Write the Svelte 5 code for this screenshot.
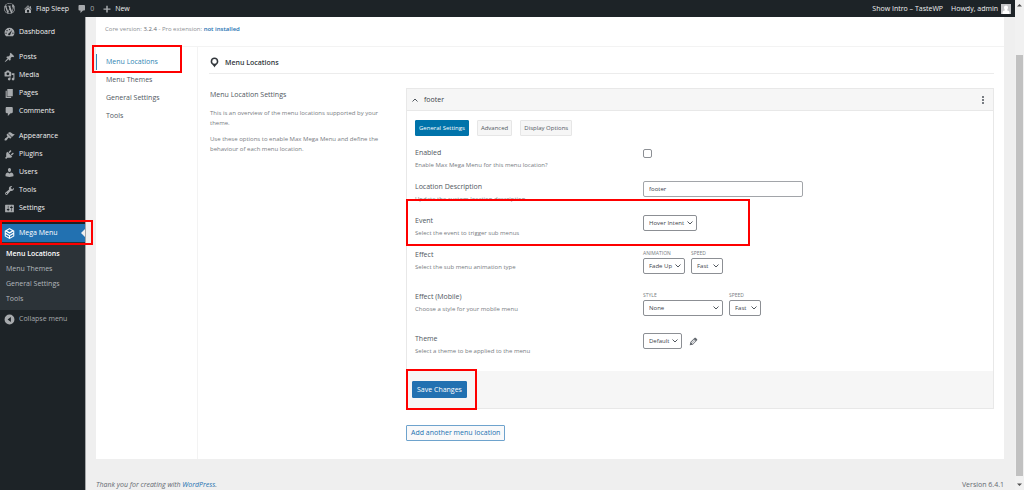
<script>
  let location = $state('footer');
  let enabled = $state(false);

  const icons = {
    wordpress: 'M20 10c0-5.51-4.49-10-10-10C4.48 0 0 4.49 0 10c0 5.52 4.48 10 10 10 5.51 0 10-4.48 10-10zM7.78 15.37L4.37 6.22c.55-.02 1.17-.08 1.17-.08.5-.06.44-1.13-.06-1.11 0 0-1.45.11-2.37.11-.18 0-.37 0-.58-.01C4.12 2.69 6.87 1.11 10 1.11c2.33 0 4.45.87 6.05 2.34-.68-.11-1.65.39-1.65 1.58 0 .74.45 1.36.9 2.1.35.61.55 1.36.55 2.46 0 1.49-1.4 5-1.4 5l-3.03-8.37c.54-.02.82-.17.82-.17.5-.05.44-1.25-.06-1.22 0 0-1.44.12-2.38.12-.87 0-2.33-.12-2.33-.12-.5-.03-.56 1.2-.06 1.22l.92.08 1.26 3.41zM17.41 10c.24-.64.74-1.87.43-4.25.7 1.29 1.05 2.71 1.05 4.25 0 3.29-1.73 6.24-4.4 7.78.97-2.59 1.94-5.2 2.92-7.78zM6.1 18.09C3.12 16.65 1.11 13.53 1.11 10c0-1.3.23-2.48.72-3.59C3.25 10.3 4.67 14.2 6.1 18.09zm4.03-6.63l2.58 6.98c-.86.29-1.76.45-2.71.45-.79 0-1.57-.11-2.29-.33.81-2.38 1.62-4.74 2.42-7.1z',
    home: 'M16 8.5l1.53 1.53-1.06 1.06L10 4.6l-6.47 6.49-1.06-1.06L10 2.5l4 4v-2h2v4zm-6-2.46l6 5.99V18H4v-5.97zM12 17v-5H8v5h4z',
    comments: 'M5 2h9c1.1 0 2 .9 2 2v7c0 1.1-.9 2-2 2h-2l-5 5v-5H5c-1.1 0-2-.9-2-2V4c0-1.1.9-2 2-2z',
    plus: 'M17 9v2.5h-5.5V17H8.5v-5.5H3V9h5.5V3.5h3V9z',
    dashboard: 'M3.8 17A9 9 0 1 1 16.2 17zM10 3.5a1.2 1.2 0 1 0 0 2.4 1.2 1.2 0 0 0 0-2.4zM5.5 5.5a1.2 1.2 0 1 0 0 2.4 1.2 1.2 0 0 0 0-2.4zM3.8 10a1.2 1.2 0 1 0 0 2.4 1.2 1.2 0 0 0 0-2.4zM16.2 10a1.2 1.2 0 1 0 0 2.4 1.2 1.2 0 0 0 0-2.4zM14.8 5.5L9 11.2a2 2 0 1 0 2.6 2z',
    posts: 'M10.44 3.02l1.82-1.82 6.36 6.35-1.83 1.82c-1.05-.68-2.48-.57-3.41.36l-.75.75c-.92.93-1.04 2.35-.35 3.41l-1.83 1.82-2.41-2.41-2.8 2.79c-.42.42-3.38 2.71-3.8 2.29s1.86-3.39 2.28-3.81l2.79-2.79L4.1 9.36l1.83-1.82c1.05.69 2.48.57 3.4-.36l.75-.75c.93-.92 1.05-2.35.36-3.41z',
    media: 'M13 11V4c0-.55-.45-1-1-1h-1.67L9 1H5L3.67 3H2c-.55 0-1 .45-1 1v7c0 .55.45 1 1 1h10c.55 0 1-.45 1-1zM7 4.5c1.38 0 2.5 1.12 2.5 2.5S8.38 9.5 7 9.5 4.5 8.38 4.5 7 5.62 4.5 7 4.5zM14 6h5v10.5c0 1.38-1.12 2.5-2.5 2.5S14 17.88 14 16.5s1.12-2.5 2.5-2.5c.17 0 .34.02.5.05V9h-3V6zm-4 8.05V13h2v3.5c0 1.38-1.12 2.5-2.5 2.5S7 17.88 7 16.5 8.12 14 9.5 14c.17 0 .34.02.5.05z',
    pages: 'M6 15V2h10v13H6zm-1 1h8v2H3V5h2v11z',
    appearance: 'M14.48 11.06L7.41 3.99l1.5-1.5c.5-.56 2.3-.47 3.51.32 1.21.8 1.43 1.28 2.91 2.1 1.18.64 2.45 1.26 4.45.85zm-.71.71L6.7 4.7 4.93 6.47c-.39.39-.39 1.02 0 1.41l1.06 1.06c.39.39.39 1.03 0 1.42-.6.6-1.43 1.11-2.21 1.69-.35.26-.7.53-1.01.84C1.43 14.23.4 16.08 1.4 17.07c.99 1 2.84-.03 4.18-1.36.31-.31.58-.66.85-1.02.57-.78 1.08-1.61 1.69-2.21.39-.39 1.02-.39 1.41 0l1.06 1.06c.39.39 1.02.39 1.41 0z',
    plugins: 'M13.11 4.36L9.87 7.6 8 5.73l3.24-3.24c.35-.34 1.05-.2 1.56.32.52.51.66 1.21.31 1.55zm-8 1.77l.91-1.12 9.01 9.01-1.19.84c-.71.71-2.63 1.16-3.82 1.16H6.14L4.9 17.26c-.59.59-1.54.59-2.12 0-.59-.58-.59-1.53 0-2.12l1.24-1.24v-3.88c0-1.13.4-3.19 1.09-3.89zm7.26 3.97l3.24-3.24c.34-.35 1.04-.21 1.55.31.52.51.66 1.21.31 1.55l-3.24 3.25z',
    users: 'M10 9.25c-2.27 0-2.73-3.44-2.73-3.44C7 4.02 7.82 2 9.97 2c2.16 0 2.98 2.02 2.71 3.81 0 0-.41 3.44-2.68 3.44zm0 2.57L12.72 10c2.39 0 4.52 2.33 4.52 4.53v2.49s-3.65 1.13-7.24 1.13c-3.65 0-7.24-1.13-7.24-1.13v-2.49c0-2.25 1.94-4.48 4.47-4.48z',
    tools: 'M16.68 9.77c-1.34 1.34-3.3 1.67-4.95.99l-5.41 6.52c-.99.99-2.59.99-3.58 0s-.99-2.59 0-3.57l6.52-5.42c-.68-1.65-.35-3.61.99-4.95 1.28-1.28 3.12-1.62 4.72-1.06l-2.89 2.89 2.82 2.82 2.86-2.87c.53 1.58.18 3.39-1.08 4.65zM3.81 16.21c.4.39 1.04.39 1.43 0 .4-.4.4-1.04 0-1.43-.39-.4-1.03-.4-1.43 0-.39.39-.39 1.03 0 1.43z',
    settings: 'M18 16V4c0-.55-.45-1-1-1H3c-.55 0-1 .45-1 1v12c0 .55.45 1 1 1h14c.55 0 1-.45 1-1zM8 11h1c.55 0 1 .45 1 1s-.45 1-1 1H8v1.5c0 .28-.22.5-.5.5s-.5-.22-.5-.5V13H6c-.55 0-1-.45-1-1s.45-1 1-1h1V5.5c0-.28.22-.5.5-.5s.5.22.5.5V11zm5-2h-1c-.55 0-1-.45-1-1s.45-1 1-1h1V5.5c0-.28.22-.5.5-.5s.5.22.5.5V7h1c.55 0 1 .45 1 1s-.45 1-1 1h-1v5.5c0 .28-.22.5-.5.5s-.5-.22-.5-.5V9z',
    mega: 'M10 0l8.7 5v10L10 20l-8.700-5V5zM10 2.2L5.5 4.8 10 7.4l4.5-2.6zM3.2 6.5v2.3L10 12.7l6.8-3.9V6.5L10 10.4zM3.2 11.2v2.7L9 17.2v-2.7zM16.8 11.2L11 14.5v2.7l5.8-3.3z',
    collapse: 'M10 1a9 9 0 1 0 0 18 9 9 0 0 0 0-18zM12.5 5.5v9L6.5 10z',
    location: 'M10 1C6.1 1 3 4.1 3 8c0 2.300 1.300 4.200 2.900 5.500C7.500 14.800 9.500 17.500 10 19c.5-1.500 2.500-4.200 4.100-5.500C15.700 12.200 17 10.300 17 8c0-3.900-3.100-7-7-7zm0 2.800a4.200 4.200 0 1 1 0 8.400 4.200 4.200 0 0 1 0-8.400z',
    edit: 'M13.89 3.39l2.71 2.72c.46.46.42 1.24.03 1.64l-8.01 8.02-5.56 1.16 1.16-5.58s7.6-7.63 7.99-8.03c.39-.39 1.22-.39 1.68.07zm-2.73 2.79l-5.59 5.61 1.11 1.11 5.54-5.65zm-2.97 8.23l5.58-5.6-1.07-1.08-5.59 5.6z',
    user: 'M10 3a4 4 0 0 1 4 4.2c0 2.3-1.300 4.600-2.300 5.300 3.300.7 5.300 2 5.300 4.500v3H3v-3c0-2.500 2-3.800 5.300-4.500C7.300 11.800 6 9.500 6 7.200A4 4 0 0 1 10 3z'
  };

  const menuGroups = [
    [{ name: 'Dashboard', icon: 'dashboard' }],
    [
      { name: 'Posts', icon: 'posts' },
      { name: 'Media', icon: 'media' },
      { name: 'Pages', icon: 'pages' },
      { name: 'Comments', icon: 'comments' }
    ],
    [
      { name: 'Appearance', icon: 'appearance' },
      { name: 'Plugins', icon: 'plugins' },
      { name: 'Users', icon: 'users' },
      { name: 'Tools', icon: 'tools' },
      { name: 'Settings', icon: 'settings' }
    ]
  ];

  const pages = ['Menu Locations', 'Menu Themes', 'General Settings', 'Tools'];
  const tabs = ['General Settings', 'Advanced', 'Display Options'];
  let activeTab = $state('General Settings');

  const rows = [
    { id: 'event', title: 'Event', desc: 'Select the event to trigger sub menus', marked: true,
      fields: [{ name: 'Event', options: ['Hover Intent', 'Hover', 'Click'] }] },
    { id: 'effect', title: 'Effect', desc: 'Select the sub menu animation type',
      fields: [
        { name: 'Animation', caption: true, options: ['Fade Up', 'Fade', 'Slide', 'None'] },
        { name: 'Speed', caption: true, options: ['Fast', 'Med', 'Slow'] }
      ] },
    { id: 'mobile', title: 'Effect (Mobile)', desc: 'Choose a style for your mobile menu',
      fields: [
        { name: 'Style', caption: true, wide: true, options: ['None', 'Slide Down', 'Slide Left', 'Slide Right'] },
        { name: 'Speed', caption: true, options: ['Fast', 'Med', 'Slow'] }
      ] },
    { id: 'theme', title: 'Theme', desc: 'Select a theme to be applied to the menu', edit: true,
      fields: [{ name: 'Theme', options: ['Default'] }] }
  ];
</script>

{#snippet icon(name)}
  <svg class="icon" viewBox="0 0 20 20" aria-hidden="true">
    <path fill="currentColor" fill-rule="evenodd" d={icons[name]} />
  </svg>
{/snippet}

<div class="screen">
  <div class="page">
    <header class="adminbar">
      <a href="#about" class="wp" aria-label="About WordPress">{@render icon('wordpress')}</a>
      <a href="#site">{@render icon('home')}Flap Sleep</a>
      <a href="#comments" class="count">{@render icon('comments')}<span>0</span></a>
      <a href="#new">{@render icon('plus')}New</a>
      <a href="#intro" class="intro">Show Intro – TasteWP</a>
      <a href="#profile">Howdy, admin <span class="avatar">{@render icon('user')}</span></a>
    </header>

    <div class="body">
      <nav class="sidebar" aria-label="Admin menu">
        {#each menuGroups as group}
          <ul>
            {#each group as item}
              <li><a href="#{item.icon}">{@render icon(item.icon)}{item.name}</a></li>
            {/each}
          </ul>
        {/each}
        <div class="current">
          <a href="#mega">{@render icon('mega')}Mega Menu</a>
          <span class="arrow"></span>
          <span class="mark"></span>
        </div>
        <ul class="submenu">
          {#each pages as page, i}
            <li><a href="#sub-{i}" class:active={i === 0}>{page}</a></li>
          {/each}
        </ul>
        <button class="collapse">{@render icon('collapse')}Collapse menu</button>
      </nav>

      <div class="content">
        <div class="panel">
          <div class="version">
            Core version: <b>3.2.4</b> - Pro extension: <a href="#pro">not installed</a>
          </div>
          <div class="columns">
            <nav class="pagenav" aria-label="Mega Menu">
              {#each pages as page, i}
                <div class="navitem" class:active={i === 0}>
                  <a href="#page-{i}">{page}</a>
                  {#if i === 0}<span class="mark"></span>{/if}
                </div>
              {/each}
            </nav>

            <main>
              <h1>{@render icon('location')}Menu Locations</h1>
              <div class="settings">
                <section class="intro-text">
                  <h2>Menu Location Settings</h2>
                  <p>This is an overview of the menu locations supported by your theme.</p>
                  <p>Use these options to enable Max Mega Menu and define the behaviour of each menu location.</p>
                </section>

                <div class="locations">
                  <form class="accordion" onsubmit={(e) => e.preventDefault()}>
                    <div class="accordion-head">
                      <svg class="caret" viewBox="0 0 6 4" aria-hidden="true"><path d="M.5 3.5L3 1l2.5 2.5" /></svg>
                      <h3>footer</h3>
                      <button type="button" class="more" aria-label="More options"><i></i><i></i><i></i></button>
                    </div>
                    <div class="accordion-body">
                      <div class="tabs">
                        {#each tabs as tab}
                          <button type="button" class:active={activeTab === tab} onclick={() => (activeTab = tab)}>{tab}</button>
                        {/each}
                      </div>

                      <div class="row">
                        <div class="about">
                          <label for="enabled">Enabled</label>
                          <p>Enable Max Mega Menu for this menu location?</p>
                        </div>
                        <input id="enabled" type="checkbox" bind:checked={enabled} />
                      </div>
                      <div class="row">
                        <div class="about">
                          <label for="description">Location Description</label>
                          <p>Update the custom location description</p>
                        </div>
                        <input id="description" type="text" bind:value={location} />
                      </div>
                      {#each rows as row}
                        <div class="row">
                          <div class="about">
                            <h4>{row.title}</h4>
                            <p>{row.desc}</p>
                          </div>
                          <div class="fields">
                            {#each row.fields as field}
                              <div class="field">
                                {#if field.caption}
                                  <label for="{row.id}-{field.name}">{field.name}</label>
                                {/if}
                                <div class="select" class:wide={field.wide}>
                                  <select id="{row.id}-{field.name}" aria-label={field.name}>
                                    {#each field.options as option}
                                      <option>{option}</option>
                                    {/each}
                                  </select>
                                  <svg viewBox="0 0 8 6" aria-hidden="true"><path d="M1.5 1.5L4 4l2.5-2.5" /></svg>
                                </div>
                              </div>
                            {/each}
                            {#if row.edit}
                              <a href="#edit" class="edit" aria-label="Edit theme">{@render icon('edit')}</a>
                            {/if}
                          </div>
                          {#if row.marked}<span class="mark"></span>{/if}
                        </div>
                      {/each}
                    </div>
                    <div class="accordion-foot">
                      <button type="submit" class="save">Save Changes</button>
                      <span class="mark"></span>
                    </div>
                  </form>
                  <button class="add">Add another menu location</button>
                </div>
              </div>
            </main>
          </div>
        </div>
        <footer>
          <em>Thank you for creating with <a href="#wordpress">WordPress</a>.</em>
          <span>Version 6.4.1</span>
        </footer>
      </div>
    </div>
  </div>

  <div class="scrollbar" aria-hidden="true">
    <svg viewBox="0 0 9 10"><path d="M2 6.5L4.5 4 7 6.5z" /></svg>
    <span class="thumb"></span>
    <svg viewBox="0 0 9 10"><path d="M2 3.5L4.5 6 7 3.5z" /></svg>
  </div>
</div>

<style>
  :global(body) {
    background: #efefef;
  }
  .screen {
    display: flex;
    height: 100vh;
    overflow: hidden;
    font: 7px/10px 'Open Sans', 'Noto Sans', sans-serif;
    color: #646970;
  }
  .screen * {
    box-sizing: border-box;
  }
  h1, h2, h3, h4, p, ul {
    margin: 0;
    padding: 0;
    font-size: 7px;
    font-weight: 400;
    list-style: none;
  }
  a {
    color: inherit;
    text-decoration: none;
  }
  button, input, select {
    margin: 0;
    font: inherit;
    color: inherit;
  }
  .icon {
    flex: none;
    width: 11px;
    height: 11px;
  }
  .mark {
    position: absolute;
    z-index: 2;
    border: 2px solid #fe0000;
    pointer-events: none;
  }

  .page {
    display: flex;
    flex-direction: column;
    flex: 1;
    min-width: 0;
  }

  /* Admin bar */
  .adminbar {
    display: flex;
    flex: none;
    align-items: center;
    gap: 8px;
    height: 17px;
    padding: 0 4px;
    background: #1d2327;
    color: #f0f0f1;
  }
  .adminbar a {
    display: flex;
    align-items: center;
    gap: 3px;
  }
  .adminbar .icon {
    width: 10px;
    height: 10px;
    color: #a7aaad;
  }
  .adminbar .wp .icon {
    width: 11px;
    height: 11px;
  }
  .adminbar .count span {
    color: #a7aaad;
  }
  .adminbar .intro {
    margin-left: auto;
  }
  .avatar {
    display: flex;
    background: #c3c4c7;
  }
  .adminbar .avatar .icon {
    color: #fff;
  }

  .body {
    display: flex;
    flex: 1;
  }

  /* Sidebar */
  .sidebar {
    position: relative;
    flex: none;
    width: 86px;
    padding-top: 6px;
    background: #1d2327;
    border-right: 1px solid #a4a6a8;
    color: #f0f0f1;
  }
  .sidebar ul {
    margin-bottom: 7px;
  }
  .sidebar ul a, .current a, .collapse {
    display: flex;
    align-items: center;
    gap: 4px;
    height: 18px;
    padding: 0 4px;
  }
  .sidebar .icon {
    color: #a7aaad;
  }
  .current {
    position: relative;
    background: #2271b1;
    color: #fff;
  }
  .current .icon {
    color: #fff;
  }
  .arrow {
    position: absolute;
    top: 5px;
    right: 0;
    border: 4px solid transparent;
    border-right-color: #efefef;
    border-left: 0;
  }
  .current .mark {
    inset: -4px -8px -3px 0;
  }
  .sidebar .submenu {
    margin: 0;
    padding: 4px 0;
    background: #2c3338;
  }
  .sidebar .submenu a {
    height: 15px;
    padding: 0 6px;
    color: #b4b9be;
  }
  .sidebar .submenu .active {
    color: #fff;
    font-weight: 600;
  }
  .collapse {
    border: 0;
    background: none;
    color: #a7aaad;
  }

  /* Page panel */
  .content {
    display: flex;
    flex-direction: column;
    flex: 1;
    min-width: 0;
    padding: 0 11px 0 10px;
  }
  .panel {
    background: #fff;
  }
  .version {
    height: 30px;
    padding: 7px 9px;
    border-bottom: 1px solid #f3f3f3;
    font-size: 6px;
    color: #8c8f94;
  }
  .version b {
    color: #646970;
    font-weight: 400;
  }
  .version a {
    color: #2271b1;
    font-weight: 600;
  }
  .columns {
    display: flex;
  }
  .pagenav {
    flex: none;
    width: 102px;
    padding-top: 6px;
    border-right: 1px solid #f3f3f3;
    color: #50575e;
  }
  .navitem {
    position: relative;
    display: flex;
    align-items: center;
    height: 18px;
  }
  .navitem a {
    padding: 3px 9px;
    border-left: 1px solid transparent;
  }
  .navitem.active a {
    border-color: #2f86b4;
    color: #2f86b4;
  }
  .navitem .mark {
    inset: -8px 15px -2px -4px;
  }

  main {
    flex: 1;
    min-width: 0;
    padding: 5px 10px 18px 11px;
  }
  h1 {
    display: flex;
    align-items: center;
    gap: 5px;
    height: 22px;
    border-bottom: 1px solid #ececec;
    color: #32373c;
    font-weight: 600;
  }
  .settings {
    display: flex;
    margin-top: 14px;
  }
  .intro-text {
    flex: none;
    width: 197px;
    padding: 0 20px 0 1px;
    color: #787c82;
  }
  .intro-text h2 {
    line-height: 14px;
    color: #50575e;
  }
  .intro-text p {
    margin-top: 6px;
    font-size: 6px;
  }
  .locations {
    flex: 1;
    min-width: 0;
  }

  /* Accordion */
  .accordion {
    border: 1px solid #e8e8e8;
  }
  .accordion-head {
    display: flex;
    align-items: center;
    gap: 6px;
    height: 22px;
    padding: 0 5px;
    background: #f6f6f6;
    border-bottom: 1px solid #e8e8e8;
  }
  .accordion-head h3 {
    color: #3c434a;
  }
  .caret {
    width: 6px;
    height: 4px;
    fill: none;
    stroke: #50575e;
  }
  .more {
    display: grid;
    gap: 1px;
    margin-left: auto;
    padding: 2px 4px;
    border: 0;
    background: none;
  }
  .more i {
    width: 2px;
    height: 2px;
    background: #787c82;
  }
  .accordion-body {
    padding: 9px 8px 4px;
  }
  .tabs {
    display: flex;
    gap: 8px;
    margin-bottom: 11px;
  }
  .tabs button {
    height: 16px;
    padding: 0 3px;
    border: 1px solid #e6e6e6;
    border-radius: 1px;
    background: #f6f6f6;
    font-size: 6px;
    color: #50575e;
  }
  .tabs .active {
    border-color: #0073aa;
    background: #0073aa;
    color: #fff;
  }
  .row {
    position: relative;
    display: flex;
    align-items: flex-start;
    padding-bottom: 10px;
  }
  .about {
    flex: none;
    width: 40%;
    line-height: 12px;
  }
  .about label, .about h4 {
    display: block;
    color: #50575e;
  }
  .about p {
    font-size: 6px;
    color: #787c82;
  }
  .row > .mark {
    inset: -16px 235px 3px -9px;
  }
  input[type='checkbox'] {
    appearance: none;
    width: 9px;
    height: 9px;
    margin-top: 2px;
    border: 1px solid #8c8f94;
    border-radius: 2px;
    background: #fff;
  }
  input[type='checkbox']:checked {
    background: #2271b1;
  }
  input[type='text'] {
    width: 28%;
    height: 16px;
    padding: 0 5px;
    border: 1px solid #a2a5a9;
    border-radius: 2px;
    font-size: 6px;
    color: #3c434a;
  }
  .fields {
    display: flex;
    align-items: flex-end;
    gap: 6px;
  }
  .field label {
    display: block;
    height: 9px;
    font-size: 5px;
    line-height: 8px;
    text-transform: uppercase;
    color: #787c82;
  }
  .field:has(label) {
    padding-bottom: 7px;
  }
  .select {
    position: relative;
  }
  .select select {
    display: block;
    appearance: none;
    height: 16px;
    padding: 0 11px 0 5px;
    border: 1px solid #8c8f94;
    border-radius: 2px;
    background: #fff;
    font-size: 6px;
    color: #3c434a;
  }
  .wide select {
    width: 80px;
  }
  .select svg {
    position: absolute;
    top: 5px;
    right: 3px;
    width: 8px;
    height: 6px;
    fill: none;
    stroke: #50575e;
    pointer-events: none;
  }
  .edit {
    display: flex;
    align-items: center;
    height: 16px;
    color: #646970;
  }
  .accordion-foot {
    position: relative;
    padding: 10px 5px;
    background: #f6f6f6;
  }
  .save {
    display: block;
    height: 17px;
    padding: 0 4px;
    border: 1px solid #2271b1;
    border-radius: 1px;
    background: #2271b1;
    color: #fff;
  }
  .accordion-foot .mark {
    left: -1px;
    top: -2px;
    bottom: -2px;
    width: 71px;
  }
  .add {
    display: block;
    height: 16px;
    margin-top: 16px;
    padding: 0 4px;
    border: 1px solid #6ea3cd;
    border-radius: 1px;
    background: #f9f9fa;
    color: #2271b1;
  }

  footer {
    display: flex;
    justify-content: space-between;
    padding-top: 21px;
    color: #646970;
  }
  footer a {
    color: #2271b1;
  }

  /* Window scrollbar */
  .scrollbar {
    display: flex;
    flex-direction: column;
    flex: none;
    width: 9px;
    background: #f1f1f1;
  }
  .scrollbar svg {
    height: 10px;
    fill: #505050;
  }
  .thumb {
    flex: 1;
    margin: 45px 1px 4px;
    background: #c1c1c1;
  }
</style>
